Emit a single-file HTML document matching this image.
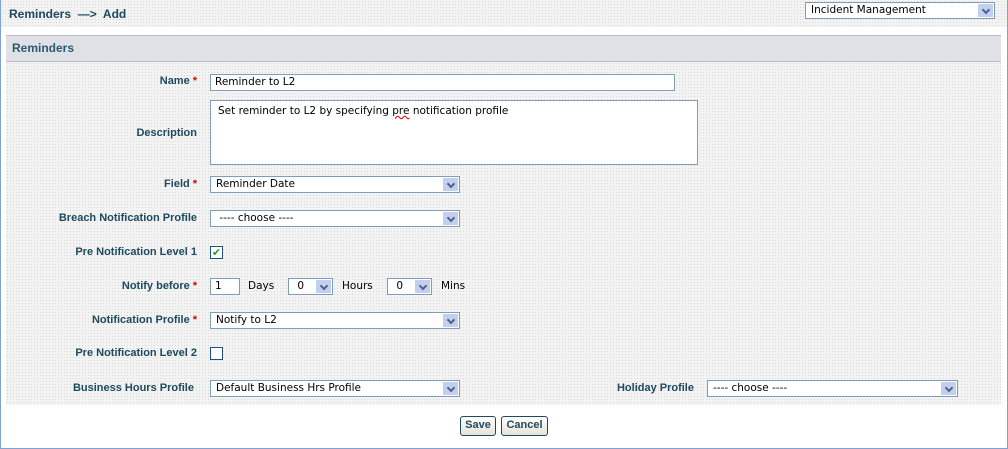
<!DOCTYPE html>
<html><head><style>
*{margin:0;padding:0;box-sizing:border-box}
body{width:1008px;height:449px;background:#fff;font-family:"DejaVu Sans",sans-serif;font-size:11px;position:relative;overflow:hidden}
.frame{position:absolute;left:0;top:0;width:1008px;height:449px;border:1px solid #7ea2d6;border-top:none}
.dot{background-color:#f3f3f3;background-image:radial-gradient(#d8d8d8 0.6px,transparent 0.7px);background-size:3px 3px}
.top{position:absolute;left:1px;top:0;width:1006px;height:27px}
.crumb{position:absolute;left:8px;top:7px;font-weight:bold;color:#1d4a5c;font-size:12px;font-family:"Liberation Sans",sans-serif}
.sel{position:absolute;background:#fff;border:1px solid #7f9db9;font-size:10.5px;padding-left:5px;line-height:15px;color:#000}
.sel::after{content:"";position:absolute;right:1px;top:1px;width:15px;bottom:1px;background:#c3cff0}
.sel::before{content:"";position:absolute;right:5px;top:4px;width:4px;height:4px;border-right:2px solid #4d6185;border-bottom:2px solid #4d6185;transform:rotate(45deg);z-index:1}
.sec{position:absolute;left:6px;top:35px;width:995px;height:27px;background:#dfe1e6;border-top:1px solid #b8bcc4;border-bottom:1px solid #b8bcc4;color:#2a5a70;font-weight:bold;font-size:12px;padding:5px 0 0 6px;font-family:"Liberation Sans",sans-serif}
.form{position:absolute;left:6px;top:62px;width:995px;height:343px}
.lbl{position:absolute;font-weight:bold;color:#1d4a5c;font-size:11px;text-align:right;font-family:"Liberation Sans",sans-serif}
.lbl i{color:#d00;font-style:normal;margin-left:3px}
.inp{position:absolute;background:#fff;border:1px solid #7f9db9;font-size:10.5px;padding-left:4px;line-height:14px}
.cb{position:absolute;width:13px;height:13px;border:1px solid #1c5180;background:#fff}
.t{position:absolute;font-size:10.5px}
.btn{position:absolute;top:416px;height:20px;border:1px solid #1d4a5c;border-radius:3px;background:linear-gradient(#fff,#e6e2d6);font-weight:bold;color:#1d4a5c;font-size:11px;text-align:center;line-height:17px;font-family:"Liberation Sans",sans-serif}
</style></head><body>
<div class="frame"></div>
<div class="top dot"><div class="crumb">Reminders &nbsp;—&gt;&nbsp; Add</div></div>
<div class="sel" style="left:805px;top:2px;width:190px;height:17px">Incident Management</div>
<div class="sec">Reminders</div>
<div class="form dot"></div>
<div class="lbl" style="right:811px;top:75px">Name<i>*</i></div>
<div class="inp" style="left:210px;top:74px;width:465px;height:17px">Reminder to L2</div>
<div class="lbl" style="right:811px;top:127px">Description</div>
<div class="inp" style="left:210px;top:100px;width:488px;height:65px;padding:3px 7px;line-height:14px">Set reminder to L2 by specifying <span style="text-decoration:underline wavy red">pre</span> notification profile</div>
<div class="lbl" style="right:811px;top:178px">Field<i>*</i></div>
<div class="sel" style="left:210px;top:176px;width:250px;height:17px">Reminder Date</div>
<div class="lbl" style="right:811px;top:212px">Breach Notification Profile</div>
<div class="sel" style="left:210px;top:210px;width:250px;height:17px">&nbsp;---- choose ----</div>
<div class="lbl" style="right:811px;top:246px">Pre Notification Level 1</div>
<div class="cb" style="left:210px;top:246px;color:#2a9a2a;font-size:11px;line-height:11px;text-align:center;font-weight:bold">✔</div>
<div class="lbl" style="right:811px;top:280px">Notify before<i>*</i></div>
<div class="inp" style="left:210px;top:278px;width:30px;height:17px">1</div>
<div class="t" style="left:248px;top:280px">Days</div>
<div class="sel" style="left:288px;top:278px;width:45px;height:17px">&nbsp;0</div>
<div class="t" style="left:342px;top:280px">Hours</div>
<div class="sel" style="left:387px;top:278px;width:45px;height:17px">&nbsp;0</div>
<div class="t" style="left:441px;top:280px">Mins</div>
<div class="lbl" style="right:811px;top:314px">Notification Profile<i>*</i></div>
<div class="sel" style="left:210px;top:312px;width:250px;height:17px">Notify to L2</div>
<div class="lbl" style="right:811px;top:347px">Pre Notification Level 2</div>
<div class="cb" style="left:210px;top:347px"></div>
<div class="lbl" style="right:814px;top:382px">Business Hours Profile</div>
<div class="sel" style="left:210px;top:380px;width:250px;height:17px">Default Business Hrs Profile</div>
<div class="lbl" style="right:314px;top:382px">Holiday Profile</div>
<div class="sel" style="left:707px;top:380px;width:251px;height:17px">---- choose ----</div>
<div class="btn" style="left:460px;width:36px">Save</div>
<div class="btn" style="left:501px;width:47px">Cancel</div>
</body></html>
